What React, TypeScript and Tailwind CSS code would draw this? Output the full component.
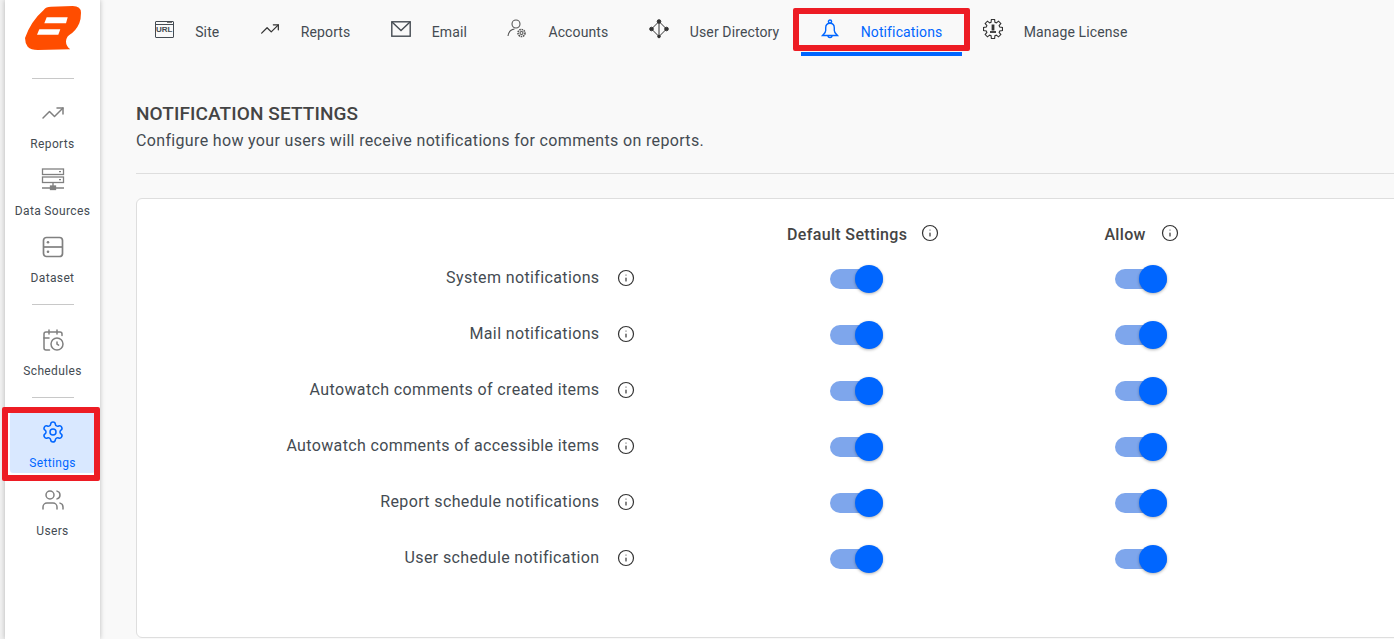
import { CalendarClock, Info, Settings, TrendingUp, Users } from 'lucide-react';
import type { ReactNode } from 'react';

function Logo() {
  return (
    <svg width="56" height="44" viewBox="0 0 56 44" className="block">
      <path
        d="M0 32 Q6 15 18.700 4 Q21 .7 26 .7 L47.700 0 Q56 0 56 6.700 Q56 13 54.300 17.300 Q51 25 44.300 29 Q41 31.500 41 35.700 Q41 40 45.300 43.300 L12.700 44 Q6 44 2.700 40.700 Q0 37 0 32 Z"
        fill="#ff4d00"
      />
      <path d="M21.700 11.300 L42.700 11.300 L41 17.300 L19.300 17.300 Z" fill="#fff" />
      <path d="M14.300 23.300 L35.300 23.300 L33.300 28.700 L12 28.700 Z" fill="#fff" />
    </svg>
  );
}

function DataSourcesIcon() {
  return (
    <svg width="24" height="24" viewBox="0 0 24 24" fill="none" stroke="#808080" strokeWidth="1.3">
      <rect x="1.500" y="1" width="21" height="5.500" />
      <rect x="1.500" y="9" width="21" height="5.500" />
      <path d="M18 3.700h2M18 11.700h2" />
      <path d="M12 14.500v5M1 20h22" />
      <rect x="9.500" y="18" width="5" height="3.500" fill="#808080" />
    </svg>
  );
}

function DatasetIcon() {
  return (
    <svg width="22" height="22" viewBox="0 0 22 22" fill="none" stroke="#808080" strokeWidth="1.7">
      <rect x="1.500" y="1.500" width="19" height="19" rx="3" />
      <path d="M1.500 11h19" />
      <circle cx="6" cy="6.200" r="1.300" fill="#808080" stroke="none" />
      <circle cx="6" cy="15.800" r="1.300" fill="#808080" stroke="none" />
    </svg>
  );
}

function UrlIcon() {
  return (
    <div className="relative h-[17px] w-[19px] rounded-[1px] border-[1.5px] border-[#444b52]">
      <div className="flex h-[3px] justify-end border-b border-[#444b52] pr-[1px]">
        <div className="h-[1px] w-[5px] bg-[#777]" />
      </div>
      <div className="absolute left-0 right-0 top-[3.5px] text-center font-['Liberation_Sans',sans-serif] text-[8px] font-bold leading-[9px] text-[#444b52]">
        URL
      </div>
    </div>
  );
}

function MailIcon() {
  return (
    <svg width="20" height="16" viewBox="0 0 20 16" fill="none" stroke="#444b52" strokeWidth="1.4">
      <rect x="0.800" y="0.800" width="18.400" height="14.400" />
      <path d="M1 1l9 8.500L19 1" />
    </svg>
  );
}

function AccountsIcon() {
  return (
    <svg width="20" height="20" viewBox="0 0 20 20" fill="none" stroke="#555" strokeWidth="1.1">
      <circle cx="9" cy="5" r="4" />
      <path d="M1 17c.5-4 3-6.500 6.500-7" />
      <circle cx="14.500" cy="14" r="3.500" strokeWidth="1.600" strokeDasharray="1.600 0.700" />
      <circle cx="14.500" cy="14" r="1.500" />
    </svg>
  );
}

function DirectoryIcon() {
  return (
    <svg width="20" height="20" viewBox="0 0 20 20" fill="#333" stroke="#333" strokeWidth="1">
      <path d="M10 2.500L17.500 10 M10 2.500L2.500 10 M2.500 10L10 17.500 M17.500 10L10 17.500 M10 2.500V17.500" fill="none" />
      <circle cx="10" cy="2.500" r="1.800" />
      <circle cx="2.500" cy="10" r="1.800" />
      <circle cx="17.500" cy="10" r="1.800" />
      <circle cx="10" cy="17.500" r="1.300" />
    </svg>
  );
}

function BellIcon() {
  return (
    <svg width="20" height="20" viewBox="0 0 20 20" fill="none" stroke="#0066ff" strokeWidth="1.400">
      <circle cx="10" cy="2.600" r="1.600" />
      <path d="M10 4.200C7 4.200 5.700 6.500 5.700 9V11.500C5.700 13.800 3.800 15 2.500 16.500H17.500C16.200 15 14.300 13.800 14.300 11.500V9C14.300 6.500 13 4.200 10 4.200Z" />
      <path d="M8 16.500a2 2 0 0 0 4 0" />
    </svg>
  );
}

// 8 tooth gear outline
function gearPath() {
  const points: string[] = [];
  for (let i = 0; i < 8; i++) {
    const a = (i * Math.PI) / 4;
    for (const [r, d] of [[7, -0.28], [9.6, -0.17], [9.6, 0.17], [7, 0.28]]) {
      points.push(`${(10 + r * Math.sin(a + d)).toFixed(2)} ${(10 - r * Math.cos(a + d)).toFixed(2)}`);
    }
  }
  return `M${points.join('L')}Z`;
}

function LicenseIcon() {
  return (
    <svg width="20" height="20" viewBox="0 0 20 20" fill="none" stroke="#333" strokeWidth="1.100">
      <path d={gearPath()} />
      <path d="M10 5.500v6" strokeWidth="2.800" />
      <path d="M7 13h6" strokeWidth="1.800" />
    </svg>
  );
}

function SideItem({ icon, label, active }: { icon: ReactNode; label: string; active?: boolean }) {
  return (
    <div className={`flex h-[61px] w-[85px] flex-col items-center rounded-[3px] ${active ? 'bg-[#d9e8ff] text-[#0066ff]' : 'text-[#444b52]'}`}>
      <div className="flex h-[40px] items-center justify-center">{icon}</div>
      <div className="mt-[3px] whitespace-nowrap text-[12px] leading-[16px] tracking-[0.35px]">{label}</div>
    </div>
  );
}

function Divider({ className }: { className: string }) {
  return <div className={`h-px w-[42px] shrink-0 bg-[#c8c8c8] ${className}`} />;
}

function Tab({ icon, label, active }: { icon: ReactNode; label: string; active?: boolean }) {
  return (
    <div className={`flex h-[56px] items-center border-b-4 pt-[12px] ${active ? 'mx-[1px] border-[#0066ff] px-[19.2px] text-[#0066ff]' : 'border-transparent px-[20.2px] text-[#444b52]'}`}>
      <div className="mt-[-6px] flex w-[20px] justify-center">{icon}</div>
      <span className="ml-[21px] whitespace-nowrap text-[14px] tracking-[0.12px]">{label}</span>
    </div>
  );
}

function Toggle({ narrow }: { narrow?: boolean }) {
  return (
    <div className={`relative mt-[2px] h-[20px] rounded-full bg-[#7ea6ec] ${narrow ? 'w-[52px]' : 'w-[53px]'}`}>
      <div className="absolute right-0 top-[-4px] h-[28px] w-[28px] rounded-full bg-[#0066ff] shadow-[0_1px_3px_rgba(0,0,0,0.3)]" />
    </div>
  );
}

const rows = [
  'System notifications',
  'Mail notifications',
  'Autowatch comments of created items',
  'Autowatch comments of accessible items',
  'Report schedule notifications',
  'User schedule notification',
];

export default function App() {
  return (
    <div className="flex h-[639px] w-[1394px] overflow-hidden bg-[#f9f9f9] font-['Roboto',sans-serif]">
      <div className="w-[5px] shrink-0 bg-[#f1f1f1]" />
      <aside className="relative flex w-[95px] shrink-0 flex-col items-center bg-white shadow-[0_0_5px_rgba(0,0,0,0.25)]">
        <div className="mt-[6px]">
          <Logo />
        </div>
        <Divider className="mt-[28px]" />
        <div className="mt-[14px] flex flex-col items-center gap-[6px]">
          <SideItem icon={<TrendingUp size={24} strokeWidth={1.5} color="#808080" />} label="Reports" />
          <SideItem icon={<DataSourcesIcon />} label="Data Sources" />
          <SideItem icon={<DatasetIcon />} label="Dataset" />
        </div>
        <Divider className="mt-[16px]" />
        <div className="mt-[15px]">
          <SideItem icon={<CalendarClock size={24} strokeWidth={1.5} color="#808080" />} label="Schedules" />
        </div>
        <Divider className="mt-[16px]" />
        <div className="mt-[14px]">
          <SideItem active icon={<Settings size={24} strokeWidth={1.5} color="#0066ff" />} label="Settings" />
        </div>
        <div className="mt-[7px]">
          <SideItem icon={<Users size={24} strokeWidth={1.5} color="#808080" />} label="Users" />
        </div>
        {/* red annotation */}
        <div className="pointer-events-none absolute left-[-3px] top-[407px] h-[74px] w-[98px] rounded-[2px] border-[6px] border-[#ed1c24]" />
      </aside>
      <main className="relative flex-1 overflow-hidden pl-[36px]">
        <nav className="ml-[-2px] flex">
          <Tab icon={<UrlIcon />} label="Site" />
          <Tab icon={<TrendingUp size={22} strokeWidth={1.5} color="#333" />} label="Reports" />
          <Tab icon={<MailIcon />} label="Email" />
          <Tab icon={<AccountsIcon />} label="Accounts" />
          <Tab icon={<DirectoryIcon />} label="User Directory" />
          <Tab active icon={<BellIcon />} label="Notifications" />
          <Tab icon={<LicenseIcon />} label="Manage License" />
        </nav>
        <h1 className="mt-[47px] text-[19px] font-medium leading-[22px] tracking-[0.1px] text-[#444]">NOTIFICATION SETTINGS</h1>
        <p className="mt-[4px] text-[16px] leading-[24px] tracking-[0.34px] text-[#444b52]">Configure how your users will receive notifications for comments on reports.</p>
        <div className="mt-[20px] h-px w-[1300px] bg-[#dedede]" />
        <section className="mt-[24px] h-[440px] w-[1300px] rounded-[6px] border border-[#dedede] bg-white">
          <div className="flex h-[51px] items-center pt-[21px] text-[16px] tracking-[0.35px] text-[#444]">
            <span className="ml-[650px] font-medium leading-[24px]">Default Settings</span>
            <Info size={18} strokeWidth={1.6} color="#333" className="mb-[4px] ml-[14px]" />
            <span className="ml-[165px] font-medium leading-[24px]">Allow</span>
            <Info size={18} strokeWidth={1.6} color="#333" className="mb-[4px] ml-[15px]" />
          </div>
          {rows.map((row) => (
            <div key={row} className="flex h-[56px] items-center">
              <div className="w-[462.5px] text-right text-[16px] tracking-[0.37px] text-[#444b52]">{row}</div>
              <Info size={18} strokeWidth={1.6} color="#333" className="ml-[17.5px]" />
              <div className="ml-[195px]">
                <Toggle />
              </div>
              <div className="ml-[232px]">
                <Toggle narrow />
              </div>
            </div>
          ))}
        </section>
        {/* red annotation */}
        <div className="pointer-events-none absolute left-[693px] top-[8px] h-[43px] w-[177px] rounded-[2px] border-[6px] border-[#ed1c24]" />
      </main>
    </div>
  );
}
